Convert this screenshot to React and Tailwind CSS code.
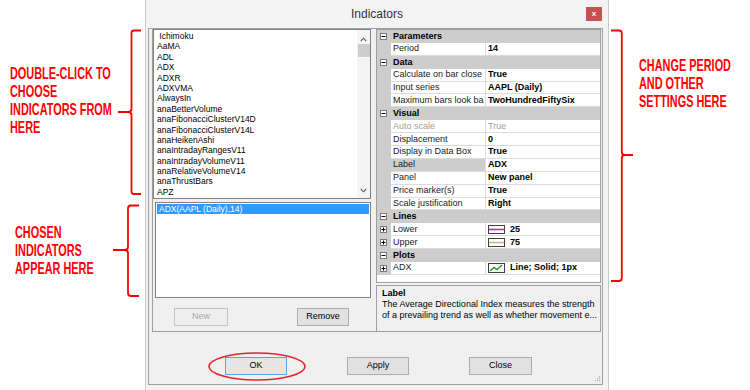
import React from "react";

const ITEMS = [
  " Ichimoku",
  "AaMA",
  "ADL",
  "ADX",
  "ADXR",
  "ADXVMA",
  "AlwaysIn",
  "anaBetterVolume",
  "anaFibonacciClusterV14D",
  "anaFibonacciClusterV14L",
  "anaHeikenAshi",
  "anaIntradayRangesV11",
  "anaIntradayVolumeV11",
  "anaRelativeVolumeV14",
  "anaThrustBars",
  "APZ",
];

const GRID = [
  { cat: "Parameters" },
  { name: "Period", value: "14" },
  { cat: "Data" },
  { name: "Calculate on bar close", value: "True" },
  { name: "Input series", value: "AAPL (Daily)" },
  { name: "Maximum bars look ba", value: "TwoHundredFiftySix" },
  { cat: "Visual" },
  { name: "Auto scale", value: "True", disabled: true },
  { name: "Displacement", value: "0" },
  { name: "Display in Data Box", value: "True" },
  { name: "Label", value: "ADX", selected: true },
  { name: "Panel", value: "New panel" },
  { name: "Price marker(s)", value: "True" },
  { name: "Scale justification", value: "Right" },
  { cat: "Lines" },
  { name: "Lower", value: "25", swatch: "#a23ba8", expand: true },
  { name: "Upper", value: "75", swatch: "#d2b48c", expand: true },
  { cat: "Plots" },
  { name: "ADX", value: "Line; Solid; 1px", plot: true, expand: true },
];

function Box({ plus }) {
  return (
    <svg width="7" height="7" viewBox="0 0 7 7" className="shrink-0">
      <rect x="0.5" y="0.5" width="6" height="6" fill="#fff" stroke="#7a7a7a" />
      <path d="M1.5 3.5H5.5" stroke="#000" />
      {plus && <path d="M3.5 1.5V5.5" stroke="#000" />}
    </svg>
  );
}

function GridRow({ r }) {
  if (r.cat) {
    return (
      <div className="flex h-[12.9px] items-center bg-[#cdcdcd]">
        <div className="ml-[3px] flex">
          <Box />
        </div>
        <span className="ml-[6px] text-[9px] font-bold leading-none text-black">{r.cat}</span>
      </div>
    );
  }
  return (
    <div className="flex h-[12.9px] bg-[#dcdcdc]">
      <div className="flex w-[14px] items-center bg-[#cdcdcd] pl-[3px]">{r.expand && <Box plus />}</div>
      <div
        className={`mb-px flex w-[94px] items-center overflow-hidden whitespace-nowrap pl-[2px] text-[9px] leading-none ${
          r.selected ? "bg-[#cdcdcd]" : "bg-white"
        } ${r.disabled ? "text-[#a0a0a0]" : "text-[#1a1a1a]"}`}
      >
        {r.name}
      </div>
      <div
        className={`mb-px ml-px flex flex-1 items-center whitespace-nowrap bg-white pl-[2px] text-[9px] leading-none ${
          r.disabled ? "text-[#a0a0a0]" : "font-bold text-black"
        }`}
      >
        {r.swatch && (
          <svg width="17" height="9" viewBox="0 0 17 9" className="mr-[5px] shrink-0">
            <rect x="0.5" y="0.5" width="16" height="8" fill="#fff" stroke="#404040" />
            <path d="M1 4.5H16" stroke={r.swatch} strokeWidth="1.6" />
          </svg>
        )}
        {r.plot && (
          <svg width="17" height="10" viewBox="0 0 17 10" className="mr-[5px] shrink-0">
            <rect x="0.5" y="0.5" width="16" height="9" fill="#fff" stroke="#404040" />
            <path d="M2 8L6 4.5L9 6.5L14 2" fill="none" stroke="#1f9a1f" strokeWidth="1.4" />
          </svg>
        )}
        {r.value}
      </div>
    </div>
  );
}

function Btn({ children, w, disabled, focus }) {
  return (
    <button
      className={`flex h-[18px] items-center justify-center border text-[9px] ${w} ${
        disabled
          ? "border-[#c4c4c4] bg-[#eeeeee] text-[#a8a8a8]"
          : focus
          ? "border-[#5aa5e8] bg-[#e5e5e5] text-black"
          : "border-[#adadad] bg-[#e1e1e1] text-black"
      }`}
    >
      {children}
    </button>
  );
}

function Note({ lines }) {
  return (
    <div className="origin-left scale-x-[0.66] whitespace-nowrap font-['Liberation_Sans',Arial,sans-serif] text-[16.5px] font-bold leading-[18px] text-[#ff0000]">
      {lines.map((l) => (
        <div key={l}>{l}</div>
      ))}
    </div>
  );
}

function Dialog() {
  return (
    <div className="flex h-[390px] w-[464px] shrink-0 flex-col border-x border-[#c9c9c9] bg-[#f3f3f3] font-['Liberation_Sans',Arial,sans-serif]">
      {/* title bar */}
      <div className="flex h-[28px] items-center">
        <div className="w-[22px]" />
        <div className="flex-1 text-center text-[12px] text-[#333]">Indicators</div>
        <div className="mr-[6px] mb-[1px] flex h-[14px] w-[16px] items-center justify-center bg-[#c75050] text-[8px] font-bold leading-none text-white">
          x
        </div>
      </div>

      {/* body */}
      <div className="ml-[2px] mr-[5px] flex h-[357px] flex-col border border-[#a0a0a0] bg-[#f0f0f0]">
        <div className="flex h-[303px]">
          {/* left pane */}
          <div className="ml-[3px] flex w-[224px] flex-col border-b border-l border-[#a0a0a0]">
            <div className="flex h-[170px] w-[218px] border border-[#828282] bg-white">
              <div className="flex-1 pl-[3px] pt-[1px]">
                {ITEMS.map((it) => (
                  <div key={it} className="h-[10.4px] whitespace-pre text-[8.5px] leading-[10.4px] text-black">
                    {it}
                  </div>
                ))}
              </div>
              <div className="flex w-[13px] flex-col items-center bg-[#f4f4f4]">
                <svg width="7" height="5" viewBox="0 0 7 5" className="mt-[7px]">
                  <path d="M0.8 4L3.5 1.2L6.2 4" fill="none" stroke="#606060" strokeWidth="1.1" />
                </svg>
                <div className="mt-[2px] h-[13px] w-[12px] bg-[#cdcdcd]" />
                <div className="flex-1" />
                <svg width="7" height="5" viewBox="0 0 7 5" className="mb-[5px]">
                  <path d="M0.8 1L3.5 3.8L6.2 1" fill="none" stroke="#606060" strokeWidth="1.1" />
                </svg>
              </div>
            </div>
            <div className="ml-[2px] mt-[3px] h-[96px] w-[216px] border border-[#828282] bg-white p-px">
              <div className="h-[10px] bg-[#3399ff] pl-[2px] text-[8.5px] leading-[10px] text-white">
                ADX(AAPL (Daily),14)
              </div>
            </div>
            <div className="mt-[10px] flex">
              <div className="ml-[21px]">
                <Btn w="w-[54px]" disabled>
                  New
                </Btn>
              </div>
              <div className="ml-[69px]">
                <Btn w="w-[52px]">Remove</Btn>
              </div>
            </div>
          </div>

          {/* right pane */}
          <div className="flex w-[225px] flex-col">
            <div className="flex h-[254px] flex-col border border-[#a0a0a0] bg-white">
              {GRID.map((r, i) => (
                <GridRow key={i} r={r} />
              ))}
            </div>
            <div className="mt-[2px] h-[47px] border border-[#a0a0a0] bg-[#f0f0f0] pl-[5px] pt-[2px] text-[9px] leading-[11px] text-black">
              <div className="font-bold">Label</div>
              <div>The Average Directional Index measures the strength</div>
              <div>of a prevailing trend as well as whether movement e...</div>
            </div>
          </div>
        </div>

        {/* bottom buttons */}
        <div className="flex flex-1">
          <div className="flex gap-[60px] pl-[76px] pt-[25px]">
            <div className="w-[62px]">
              <Btn w="w-[62px]" focus>
                OK
              </Btn>
            </div>
            <Btn w="w-[62px]">Apply</Btn>
            <Btn w="w-[63px]">Close</Btn>
          </div>
          <div className="ml-auto mb-[2px] mr-[1px] self-end">
            <svg width="6" height="6" viewBox="0 0 6 6">
              <rect x="4" y="0" width="1.2" height="1.2" fill="#b0b0b0" />
              <rect x="2" y="2" width="1.2" height="1.2" fill="#b0b0b0" />
              <rect x="4" y="2" width="1.2" height="1.2" fill="#b0b0b0" />
              <rect x="0" y="4" width="1.2" height="1.2" fill="#b0b0b0" />
              <rect x="2" y="4" width="1.2" height="1.2" fill="#b0b0b0" />
              <rect x="4" y="4" width="1.2" height="1.2" fill="#b0b0b0" />
            </svg>
          </div>
        </div>
      </div>
    </div>
  );
}

export default function App() {
  return (
    <div className="relative flex h-[390px] w-[750px] overflow-hidden bg-white">
      {/* left notes */}
      <div className="relative w-[145px] shrink-0 pl-[10px] pt-[64px]">
        <svg className="absolute inset-0" width="145" height="390" viewBox="0 0 145 390">
          <path
            d="M141 30.5H134Q131.5 30.5 131.5 33V109Q131.5 112 128 112H118M128 112Q131.5 112 131.5 115V191.5Q131.5 194 134 194H141"
            fill="none"
            stroke="#ff0000"
            strokeWidth="1.8"
          />
          <path
            d="M139 205.5H131Q128 205.5 128 208.5V247Q128 250 124.5 250H113M124.5 250Q128 250 128 253V293Q128 296 131 296H139"
            fill="none"
            stroke="#ff0000"
            strokeWidth="1.8"
          />
        </svg>
        <Note lines={["DOUBLE-CLICK TO", "CHOOSE", "INDICATORS FROM", "HERE"]} />
        <div className="mt-[87px] pl-[5px]">
          <Note lines={["CHOSEN", "INDICATORS", "APPEAR HERE"]} />
        </div>
      </div>

      <Dialog />

      {/* right notes */}
      <div className="relative w-[141px] shrink-0 pl-[30px] pt-[56px]">
        <svg className="absolute inset-0" width="141" height="390" viewBox="0 0 141 390">
          <path
            d="M2 30.5H10Q12.8 30.5 12.8 33.5V152Q12.8 155 16 155H24M16 155Q12.8 155 12.8 158V278Q12.8 281 10 281H2"
            fill="none"
            stroke="#ff0000"
            strokeWidth="1.8"
          />
        </svg>
        <Note lines={["CHANGE PERIOD", "AND OTHER", "SETTINGS HERE"]} />
      </div>

      {/* highlight around OK */}
      <svg className="absolute left-[207px] top-[351px]" width="100" height="31" viewBox="0 0 100 31">
        <ellipse cx="50" cy="15.5" rx="48" ry="13.5" fill="none" stroke="#e3262a" strokeWidth="1.6" />
      </svg>
    </div>
  );
}
